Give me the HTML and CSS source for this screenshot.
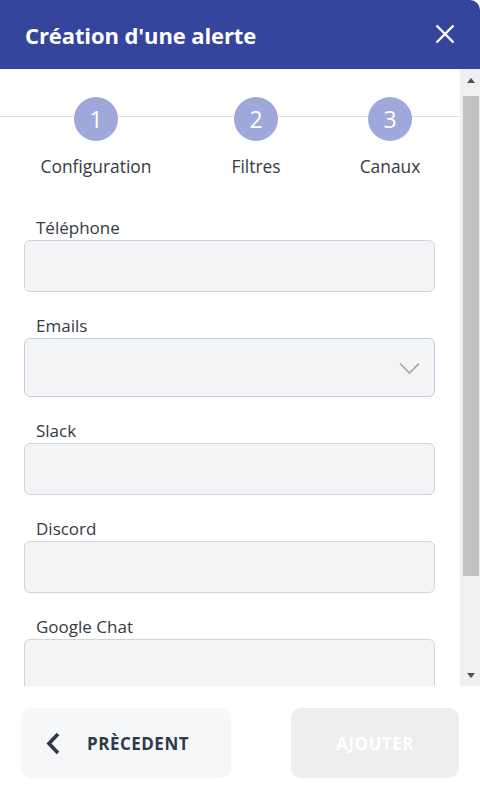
FILE: index.html
```html
<!DOCTYPE html>
<html lang="fr">
<head>
<meta charset="utf-8">
<title>Création d'une alerte</title>
<link rel="stylesheet" href="styles.css">
</head>
<body>
<div class="modal">
  <header class="header">
    <h1 class="title">Création d'une alerte</h1>
    <svg class="close" width="20" height="20" viewBox="0 0 20 20"><path d="M1.5 1.5 L18.5 18.5 M18.5 1.5 L1.5 18.5" stroke="#fff" stroke-width="2.4" fill="none"/></svg>
  </header>
  <div class="body">
    <div class="content">
      <div class="steps">
        <div class="step"><div class="circle">1</div><div class="step-label">Configuration</div></div>
        <div class="step"><div class="circle">2</div><div class="step-label">Filtres</div></div>
        <div class="step"><div class="circle">3</div><div class="step-label">Canaux</div></div>
      </div>
      <div class="field">
        <label class="label">Téléphone</label>
        <div class="input"></div>
      </div>
      <div class="field">
        <label class="label">Emails</label>
        <div class="input select">
          <svg width="21" height="13" viewBox="0 0 21 13"><path d="M1 1.5 L10.5 11 L20 1.5" stroke="#a3a3a3" stroke-width="1.6" fill="none"/></svg>
        </div>
      </div>
      <div class="field">
        <label class="label">Slack</label>
        <div class="input"></div>
      </div>
      <div class="field">
        <label class="label">Discord</label>
        <div class="input"></div>
      </div>
      <div class="field">
        <label class="label">Google Chat</label>
        <div class="input"></div>
      </div>
    </div>
    <div class="scrollbar">
      <div class="sb-btn"><span class="arrow-up"></span></div>
      <div class="thumb"></div>
      <div class="sb-space"></div>
      <div class="sb-btn"><span class="arrow-down"></span></div>
    </div>
  </div>
  <footer class="footer">
    <button class="btn btn-prev">
      <svg width="15" height="23" viewBox="0 0 15 23"><path d="M12 2 L3 11.5 L12 21" stroke="#2d3748" stroke-width="3.6" fill="none"/></svg>
      <span>PRÈCEDENT</span>
    </button>
    <button class="btn btn-add">AJOUTER</button>
  </footer>
</div>
</body>
</html>
```
FILE: styles.css
```css
* { box-sizing: border-box; }
html, body { margin: 0; padding: 0; background: #fff; }
body { font-family: "Open Sans", "Noto Sans", sans-serif; width: 480px; height: 796px; overflow: hidden; }

.modal { display: flex; flex-direction: column; height: 796px; border-top-right-radius: 10px; overflow: hidden; background: #fff; }

.header { height: 69px; flex: none; background: #35449c; display: flex; align-items: center; justify-content: space-between; padding: 0 25px 0 25px; }
.title { margin: 0; color: #fff; font-size: 22px; font-weight: 700; letter-spacing: -0.1px; }
.close { display: block; margin-top: -1px; }

.body { flex: 1; display: flex; overflow: hidden; }
.content { flex: 1; overflow: hidden; padding: 28px 25px 0 24px; }

.steps { display: grid; grid-template-columns: 152px 168px 100px; margin: 0 -25px 0 -24px; padding-left: 20px; background: linear-gradient(#dde0e8, #dde0e8) no-repeat 0 19px / 100% 1px; }
.step { display: flex; flex-direction: column; align-items: center; }
.circle { width: 44px; height: 44px; border-radius: 50%; background: #9fa8da; color: #fff; font-size: 23px; display: flex; align-items: center; justify-content: center; line-height: 1; }
.step-label { margin-top: 13px; font-size: 17.4px; line-height: 24px; color: #353a43; white-space: nowrap; }

.field { margin-top: 38px; }
.field + .field { margin-top: 22px; }
.label { display: block; padding-left: 12px; font-size: 17px; line-height: 24px; color: #353a43; }
.input { height: 52px; background: #f3f4f6; border: 1px solid #d1d5db; border-radius: 6px; }
.select { height: 59px; border-color: #c5cae9; display: flex; align-items: center; justify-content: flex-end; padding-right: 14px; padding-top: 2px; }
.select svg { display: block; }

.scrollbar { width: 20px; flex: none; background: #f0f0f0; display: flex; flex-direction: column; align-items: center; padding-left: 1px; }
.sb-btn { height: 20px; width: 100%; display: flex; align-items: center; justify-content: center; flex: none; }
.arrow-up { width: 0; height: 0; border-left: 4.5px solid transparent; border-right: 4.5px solid transparent; border-bottom: 5px solid #505050; margin-top: 2px; }
.arrow-down { width: 0; height: 0; border-left: 4.5px solid transparent; border-right: 4.5px solid transparent; border-top: 5px solid #505050; margin-top: -2px; }
.thumb { width: 16px; height: 480px; margin-top: 7px; background: #c1c1c1; flex: none; }
.sb-space { flex: 1; }

.footer { height: 110px; flex: none; display: flex; justify-content: space-between; align-items: flex-start; padding: 22px 21px 0 21px; }
.btn { height: 70px; border: none; border-radius: 10px; font-family: "Open Sans", "Noto Sans", sans-serif; font-size: 17px; font-weight: 700; letter-spacing: 0.5px; cursor: pointer; }
.btn-prev { width: 210px; background: #f5f7f9; color: #2d3a4a; display: flex; align-items: center; padding: 0 0 0 25px; gap: 26px; }
.btn-prev svg { display: block; margin-top: 1px; }
.btn-add { width: 168px; background: #eeeeee; color: #fff; }
```
